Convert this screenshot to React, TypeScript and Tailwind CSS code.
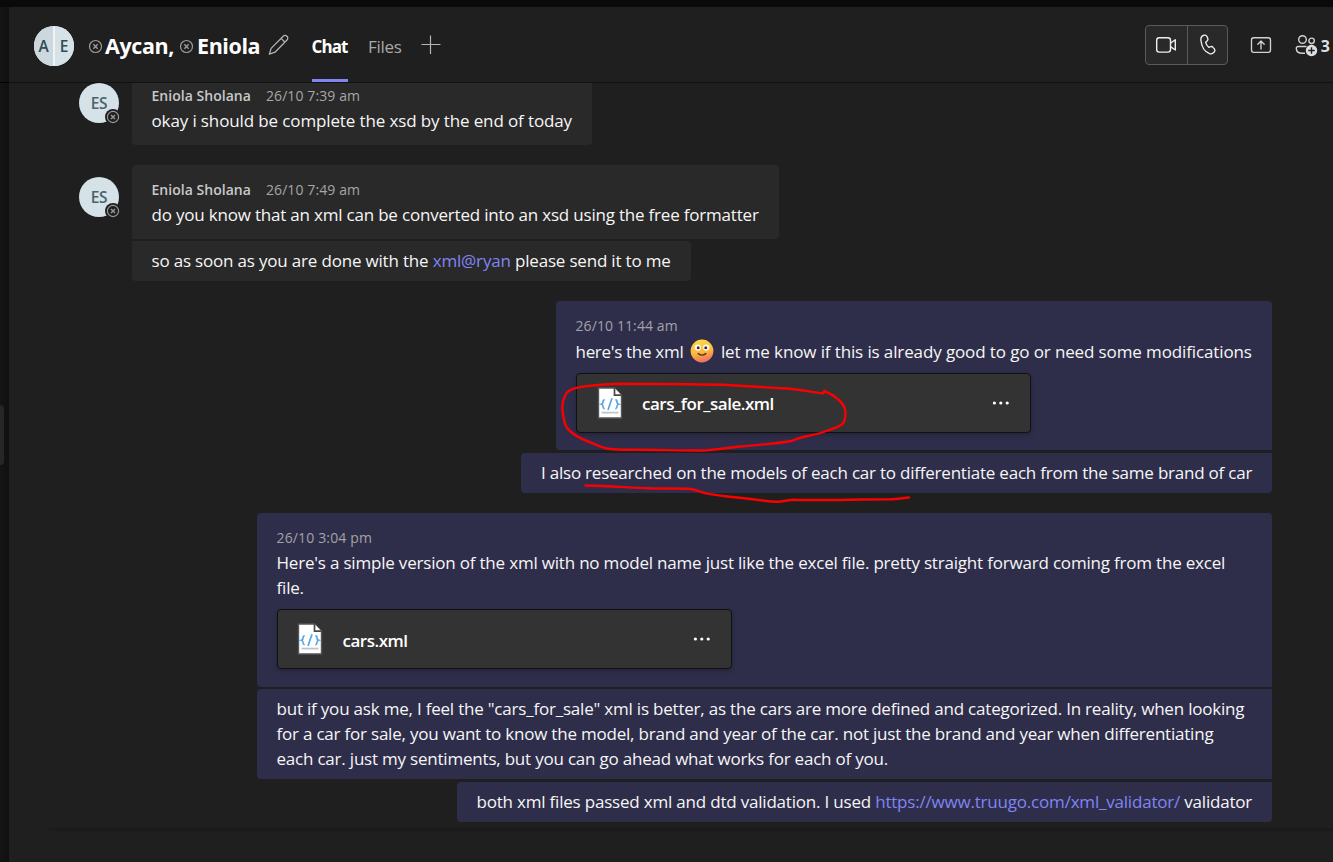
import type { ReactNode } from "react";

function OfflineMark({ className }: { className: string }) {
  return (
    <svg viewBox="0 0 14 14" className={className} fill="none" stroke="currentColor">
      <circle cx="7" cy="7" r="5.6" strokeWidth="1.15" />
      <path d="M5 5l4 4M9 5L5 9" strokeWidth="1.35" />
    </svg>
  );
}

function GroupAvatar() {
  return (
    <div className="mt-[2px] flex h-10 w-10 shrink-0 overflow-hidden rounded-full bg-[#eef4f5] text-[15.5px] leading-10 font-semibold text-[#2f4c52]">
      <div className="w-[19px] bg-[#cdd8de] text-center">A</div>
      <div className="ml-[2px] w-[19px] bg-[#d5e2e8] pr-px text-center">E</div>
    </div>
  );
}

function Avatar() {
  return (
    <div className="relative h-10 w-10 shrink-0 rounded-full bg-[#d5e2e8] text-center text-[15.5px] leading-10 font-semibold tracking-[-0.4px] text-[#4b636b]">
      ES
      <span className="absolute right-[-2px] bottom-[-2px] flex h-4 w-4 items-center justify-center rounded-full bg-[#1f1f1f] text-[#9a9a9a]">
        <OfflineMark className="h-[14px] w-[14px]" />
      </span>
    </div>
  );
}

function FileCard({ name, className, labelClass }: { name: string; className: string; labelClass: string }) {
  return (
    <div
      className={`flex h-[60px] w-[455px] items-center rounded-[4px] border border-[#111111] bg-[#333333] shadow-[0_2px_4px_rgba(0,0,0,0.25)] ${className}`}
    >
      <svg viewBox="0 0 26 32" className="ml-[19.5px] h-8 w-[26px] shrink-0">
        <path d="M1.5 1H17.5L24.5 8.2V31H1.5Z" fill="#ffffff" stroke="#565656" strokeWidth="1.4" />
        <path d="M17.5 1V8.2H24.5" fill="#fff" stroke="#484848" strokeWidth="1.7" />
        <path d="M7.6 12.5Q5.8 13.2 6 15Q6.1 16.6 4.3 17.2Q6.1 17.8 6 19.4Q5.8 21.2 7.6 21.9" fill="none" stroke="#58a7e6" strokeWidth="1.7" />
        <path d="M18.4 12.5Q20.2 13.2 20 15Q19.9 16.6 21.7 17.2Q19.9 17.8 20 19.4Q20.2 21.2 18.4 21.9" fill="none" stroke="#58a7e6" strokeWidth="1.7" />
        <path d="M15 11.2L11 23" stroke="#58a7e6" strokeWidth="1.7" />
        <path d="M4.5 25.6H21.5" stroke="#c4c4c4" strokeWidth="1.8" />
      </svg>
      <span className={`ml-[19.5px] text-[17px] leading-[25px] font-semibold tracking-[-0.47px] text-white ${labelClass}`}>{name}</span>
      <svg viewBox="0 0 18 4" className="mr-5 ml-auto h-1 w-[18px]" fill="#ffffff">
        <circle cx="2.4" cy="2" r="1.6" />
        <circle cx="8.8" cy="2" r="1.6" />
        <circle cx="15.2" cy="2" r="1.6" />
      </svg>
    </div>
  );
}

function Smiley() {
  return (
    <svg viewBox="0 0 24 24" className="mr-[6.5px] ml-[7px] h-6 w-6 shrink-0 -translate-y-px">
      <defs>
        <linearGradient id="face" x1="0.35" y1="0" x2="0.6" y2="1">
          <stop offset="0" stopColor="#ffd945" />
          <stop offset="0.55" stopColor="#fcb83a" />
          <stop offset="1" stopColor="#ee6a66" />
        </linearGradient>
      </defs>
      <circle cx="12" cy="12" r="11.4" fill="url(#face)" />
      <circle cx="7.8" cy="8.6" r="3.1" fill="#fff" />
      <circle cx="16.2" cy="8.6" r="3.1" fill="#fff" />
      <circle cx="8.2" cy="8.7" r="1.5" fill="#3e2a38" />
      <circle cx="15.8" cy="8.7" r="1.5" fill="#3e2a38" />
      <path d="M8.2 14.6Q12 17.6 15.8 14.6" fill="none" stroke="#5b3426" strokeWidth="1.4" strokeLinecap="round" />
    </svg>
  );
}

function Sender({ time }: { time: string }) {
  return (
    <div className="flex gap-[15px] text-[14px] leading-5 whitespace-nowrap">
      <span className="font-semibold tracking-[0.03px] text-[#c9c9c9]">Eniola Sholana</span>
      <span className="tracking-[0.1px] text-[#a6a6a6]">{time}</span>
    </div>
  );
}

function Line({ className, children }: { className: string; children: ReactNode }) {
  return <div className={`whitespace-pre ${className}`}>{children}</div>;
}

function Header() {
  return (
    <header className="flex h-[75px] shrink-0 items-center pl-[25px] text-white">
      <GroupAvatar />
      <OfflineMark className="mt-[3px] ml-[14px] h-[15px] w-[15px] shrink-0 text-[#9a9a9a]" />
      <span className="mt-[3px] ml-[2px] w-[74px] text-[21.5px] font-bold tracking-[-0.4px]">Aycan,</span>
      <OfflineMark className="mt-[3px] h-[15px] w-[15px] shrink-0 text-[#9a9a9a]" />
      <span className="mt-[3px] ml-[3px] w-[69.5px] text-[21.5px] font-bold tracking-[-0.4px]">Eniola</span>
      <svg viewBox="0 0 22 22" className="ml-[1px] h-[22px] w-[22px] shrink-0" fill="none" stroke="#b4b4b4" strokeWidth="1.25" strokeLinejoin="round">
        <path d="M15.2 2.2a2.6 2.6 0 0 1 3.7 0l.1.1a2.6 2.6 0 0 1 0 3.7L7 18.2 1.3 20.2 3.1 14.4Z" />
        <path d="M13.1 4.4L17 8.2" />
      </svg>
      <div className="ml-[22px] flex h-full w-9 flex-col justify-end">
        <span className="mb-[20px] text-[17px] leading-[25px] font-bold tracking-[-0.92px]">Chat</span>
        <div className="h-[3px] bg-[#7f85f5]" />
      </div>
      <span className="mt-[3px] ml-[20.5px] w-9 text-[17px] leading-[25px] tracking-[-0.3px] text-[#a9a9a9]">Files</span>
      <svg viewBox="0 0 20 20" className="ml-[17px] h-5 w-5" stroke="#b4b4b4" strokeWidth="1.2">
        <path d="M.5 9.5H19.5M9.5 .5V19" />
      </svg>
      <div className="ml-auto flex h-10 w-[83px] shrink-0 rounded-[4px] border border-[#5a5a5a] bg-[#292929]">
        <div className="flex w-[42px] items-center justify-center border-r border-[#5a5a5a]">
          <svg viewBox="0 0 22 18" className="h-[18px] w-[22px]" fill="none" stroke="#f0f0f0" strokeWidth="1.4" strokeLinejoin="round">
            <rect x="1.7" y="1.7" width="13.8" height="14.4" rx="2.6" />
            <path d="M15.5 7.3L20.3 3.8V14L15.5 10.6" />
          </svg>
        </div>
        <div className="flex flex-1 items-center justify-center pl-px">
          <svg viewBox="0 0 20 22" className="h-[22px] w-5" fill="none" stroke="#f0f0f0" strokeWidth="1.35" strokeLinejoin="round">
            <path d="M5.3 1.5l1.3-.3c1-.2 1.8.2 2.2 1.1l1 2.2c.4.9.1 1.7-.5 2.3L7.7 8.3c.4 1.8 1.5 3.7 3 5l2.1-.7c.9-.3 1.7 0 2.2.7l1.5 1.9c.6.8.5 1.8-.1 2.5l-1 1c-1 1-2.5 1.4-3.9.9C6.7 17.9 3.6 12.7 2.9 6.3c-.2-2.2.6-4.2 2.4-4.8Z" />
          </svg>
        </div>
      </div>
      <svg viewBox="0 0 22 18" className="ml-[22px] h-[18px] w-[22px] shrink-0" fill="none" stroke="#d2d2d2" strokeWidth="1.35" strokeLinecap="round" strokeLinejoin="round">
        <rect x="1.5" y="1.7" width="19" height="14.6" rx="2.2" />
        <path d="M11 13V5.2M7.8 8.2L11 5l3.2 3.2" />
      </svg>
      <svg viewBox="0 0 23 23" className="mt-[2px] ml-[23px] h-[23px] w-[23px] shrink-0" fill="none" stroke="#d2d2d2" strokeWidth="1.4">
        <circle cx="7.5" cy="5.5" r="3.8" />
        <circle cx="16.6" cy="6.8" r="2.7" />
        <path d="M11.5 12.5H3.2C2 12.5 1.3 13.3 1.3 14.4C1.3 17.5 4 19.2 7.5 19.2H10" />
        <circle cx="16.5" cy="16.5" r="5.7" fill="#dedede" stroke="none" />
        <path d="M16.5 13.3V19.7M13.3 16.5H19.7" stroke="#1f1f1f" strokeWidth="1.4" />
      </svg>
      <span className="mt-[3px] mr-[3px] ml-[3px] text-[16px] leading-6 font-bold text-[#dedede]">3</span>
    </header>
  );
}

function RedMarkup() {
  return (
    <svg viewBox="0 0 1333 862" className="pointer-events-none absolute inset-0 h-[862px] w-[1333px]" fill="none" stroke="#fb0000" strokeWidth="2.4" strokeLinecap="round" strokeLinejoin="round">
      <path d="M824.5 390.5L823 393.3C812 392 802 390 790 388.8C768 387.5 745 386 723 384.7C688 384 654 383.8 620 383.7C609 384 600 384.6 590 385.7C582 386.7 577 387 571.7 389.3C568 391 566 393 565 396C563 399.5 562.3 403 562.3 407C562.3 412 563 416 564 420C565 425 567 428.5 570 431C575 435.5 580 438.5 587 441C595 444 602 448 610 449C618 450 628 449.7 637 449.7C660 449.7 690 451 707 450.3C718 449.5 729 447.5 740 446.5C757 444.8 775 444 790 441.3C795 440 799 438 803 437C810 435.5 817 434.5 823.3 432C831 429 838 427.5 842.5 424C845 421 845.6 416 845.3 411.7C845 407 842.5 403 838.3 399.5C834 396 831 393 824.5 391.5" />
      <path d="M585.5 485.5C607 486 629 487.5 650 488.3L688 488.7C695 489 700 492 706 493.3C722 496.5 738 497.3 753 499.3C761 500.3 769 501.5 778 501.7C783 501.5 788 500 794 499.7C817 500.5 840 500 863 499.5L890 499.3C897 499 903 498 909 497.5" />
    </svg>
  );
}

export default function App() {
  return (
    <div className="relative flex h-[862px] w-[1333px] flex-col overflow-hidden bg-[#1f1f1f] font-['Open_Sans','Noto_Sans',sans-serif]">
      <div className="h-[7px] shrink-0 bg-[#0a0a0a]" />
      <div className="flex min-h-0 flex-1">
        <aside className="flex w-[9px] shrink-0 flex-col bg-gradient-to-r from-[#151515] to-[#101010]">
          <div className="h-[76px] border-b border-black" />
          <div className="mt-[322px] h-[60px] w-1 rounded-r-[4px] bg-[#272727]" />
        </aside>
        <div className="flex min-w-0 flex-1 flex-col">
          <Header />
          <div className="h-px shrink-0 bg-[#121212]" />
          <main className="flex flex-col text-[17px] leading-[25px] text-[#f6f6f6]">
            <section className="flex pl-[70px]">
              <Avatar />
              <div className="ml-[13px] h-[62px] w-[460px] rounded-b-[4px] bg-[#292929] pt-[3px] pl-[19.5px]">
                <Sender time="26/10 7:39 am" />
                <Line className="mt-[2px] tracking-[-0.125px]">okay i should be complete the xsd by the end of today</Line>
              </div>
            </section>

            <section className="mt-5 flex pl-[70px]">
              <div className="pt-3">
                <Avatar />
              </div>
              <div className="ml-[13px] flex flex-col items-start gap-[2px]">
                <div className="h-[74px] w-[647px] rounded-t-[4px] rounded-br-[4px] bg-[#292929] pt-[15px] pl-[19.5px]">
                  <Sender time="26/10 7:49 am" />
                  <Line className="mt-[2px] tracking-[-0.2px]">do you know that an xml can be converted into an xsd using the free formatter</Line>
                </div>
                <div className="h-10 w-[559px] rounded-r-[4px] rounded-bl-[4px] bg-[#292929] pt-[7px] pl-[19.5px]">
                  <Line className="tracking-[-0.185px]">
                    so as soon as you are done with the <a className="text-[#7f85f5]">xml@ryan</a> please send it to me
                  </Line>
                </div>
              </div>
            </section>

            <section className="mt-5 flex flex-col items-end pr-[61px]">
              <div className="h-[149px] w-[716px] rounded-t-[4px] rounded-bl-[4px] bg-[#2f2e4a] pt-[15px] pl-5">
                <div className="-ml-[0.5px] text-[14px] leading-5 tracking-[0.1px] text-[#a2a2a8]">26/10 11:44 am</div>
                <div className="mt-[3px] -ml-[0.5px] flex h-[25px] items-center whitespace-nowrap">
                  <span className="tracking-[-0.3px]">here's the xml</span>
                  <Smiley />
                  <span className="tracking-[-0.12px]">let me know if this is already good to go or need some modifications</span>
                </div>
                <FileCard name="cars_for_sale.xml" className="mt-[9px]" labelClass="" />
              </div>
              <div className="mt-[3px] h-10 w-[751px] rounded-l-[4px] rounded-br-[4px] bg-[#2f2e4a] pt-[7px] pl-5">
                <Line className="tracking-[-0.22px]">I also researched on the models of each car to differentiate each from the same brand of car</Line>
              </div>
            </section>

            <section className="mt-5 flex flex-col items-end pr-[61px]">
              <div className="h-[174px] w-[1015px] rounded-t-[4px] rounded-bl-[4px] bg-[#2f2e4a] pt-[15px] pl-[19.5px]">
                <div className="text-[14px] leading-5 tracking-[0.15px] text-[#a2a2a8]">26/10 3:04 pm</div>
                <Line className="mt-[2px] tracking-[-0.195px]">Here's a simple version of the xml with no model name just like the excel file. pretty straight forward coming from the excel</Line>
                <Line className="tracking-[-0.19px]">file.</Line>
                <FileCard name="cars.xml" className="mt-[9px]" labelClass="mt-[2px]" />
              </div>
              <div className="mt-[2px] h-[90px] w-[1015px] rounded-l-[4px] bg-[#2f2e4a] pt-[7px] pl-[19.5px]">
                <Line className="tracking-[-0.205px]">but if you ask me, I feel the "cars_for_sale" xml is better, as the cars are more defined and categorized. In reality, when looking</Line>
                <Line className="tracking-[-0.21px]">for a car for sale, you want to know the model, brand and year of the car. not just the brand and year when differentiating</Line>
                <Line className="tracking-[-0.21px]">each car. just my sentiments, but you can go ahead what works for each of you.</Line>
              </div>
              <div className="mt-[3px] h-10 w-[815px] rounded-l-[4px] rounded-br-[4px] bg-[#2f2e4a] pt-[7px] pl-[19.5px]">
                <Line className="tracking-[-0.2px]">
                  both xml files passed xml and dtd validation. I used <a className="text-[#7f85f5]">https://www.truugo.com/xml_validator/</a> validator
                </Line>
              </div>
            </section>
            <div className="mt-[6px] ml-10 h-[3px] bg-[#1b1b1b]" />
          </main>
        </div>
      </div>
      <RedMarkup />
    </div>
  );
}
